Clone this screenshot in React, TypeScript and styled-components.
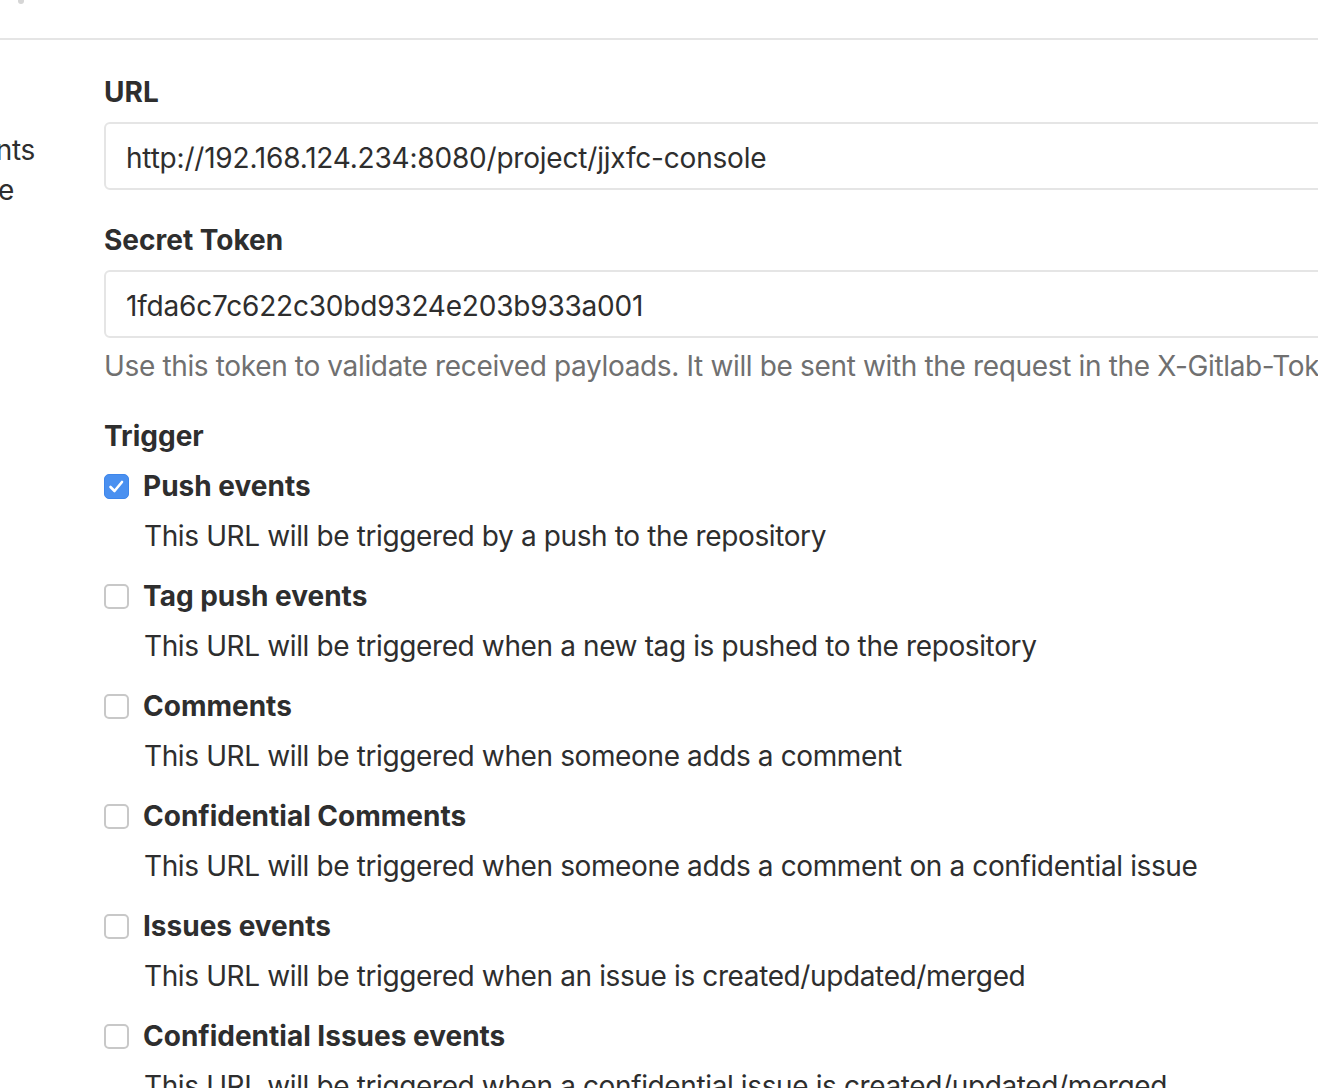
import React from "react";
import styled, { createGlobalStyle } from "styled-components";

const Global = createGlobalStyle`
  html, body { margin: 0; padding: 0; background: #fff; overflow: hidden; }
  body { font-family: Inter, "Noto Sans", "Liberation Sans", sans-serif; color: #2e2e2e; }
  * { box-sizing: border-box; }
`;

const Page = styled.div`
  width: 1318px;
  height: 1088px;
  overflow: hidden;
  display: flex;
  flex-direction: column;
`;

const TopBar = styled.div`
  height: 40px;
  flex: none;
  border-bottom: 2px solid #e5e5e5;
  position: relative;
`;

const TopFragment = styled.span`
  position: absolute;
  left: 18px;
  top: -2px;
  width: 6px;
  height: 6px;
  background: #d6d6d6;
  border-radius: 0 0 3px 3px;
`;

const Row = styled.div`
  display: flex;
  align-items: flex-start;
`;

const Sidebar = styled.div`
  flex: none;
  width: 104px;
  padding-top: 90px;
  display: flex;
  flex-direction: column;
  overflow: hidden;
`;

const SideLine = styled.div<{ $end: number }>`
  font-size: 28px;
  line-height: 40px;
  letter-spacing: -0.3px;
  white-space: nowrap;
  text-align: right;
  width: ${(p) => p.$end}px;
  direction: rtl;
  overflow: hidden;
`;

const Main = styled.div`
  flex: none;
  width: 1400px;
  padding-top: 32px;
  display: flex;
  flex-direction: column;
`;

const Label = styled.div<{ $top?: number }>`
  font-size: 28px;
  line-height: 40px;
  font-weight: 700;
  letter-spacing: 0;
  color: #2e2e2e;
  margin-top: ${(p) => p.$top ?? 0}px;
`;

const Input = styled.div`
  margin-top: 10px;
  height: 68px;
  border: 2px solid #e5e5e5;
  border-radius: 6px;
  padding: 4px 20px 0;
  display: flex;
  align-items: center;
  font-size: 28px;
  letter-spacing: -0.2px;
  color: #2e2e2e;
  white-space: nowrap;
`;

const Help = styled.div`
  margin-top: 8px;
  font-size: 28px;
  line-height: 40px;
  letter-spacing: -0.35px;
  color: #707070;
  white-space: nowrap;
`;

const TriggerList = styled.div`
  display: flex;
  flex-direction: column;
  gap: 20px;
  margin-top: 10px;
`;

const Item = styled.div`
  display: flex;
  flex-direction: column;
  gap: 10px;
`;

const CheckRow = styled.label`
  display: flex;
  align-items: center;
  gap: 14px;
  height: 40px;
`;

const Box = styled.span<{ $checked?: boolean }>`
  width: 25px;
  height: 25px;
  flex: none;
  border-radius: 5px;
  display: flex;
  align-items: center;
  justify-content: center;
  background: ${(p) => (p.$checked ? "#4a90f0" : "#fff")};
  border: ${(p) => (p.$checked ? "1px solid #3f86ea" : "2px solid #c8c8c8")};
`;

const CheckLabel = styled.span`
  font-size: 28px;
  line-height: 40px;
  font-weight: 700;
  letter-spacing: 0;
  color: #2e2e2e;
`;

const Desc = styled.div`
  padding-left: 40px;
  font-size: 28px;
  line-height: 40px;
  letter-spacing: -0.38px;
  color: #2e2e2e;
  white-space: nowrap;
`;

const triggers = [
  { label: "Push events", desc: "This URL will be triggered by a push to the repository", checked: true },
  { label: "Tag push events", desc: "This URL will be triggered when a new tag is pushed to the repository" },
  { label: "Comments", desc: "This URL will be triggered when someone adds a comment" },
  { label: "Confidential Comments", desc: "This URL will be triggered when someone adds a comment on a confidential issue" },
  { label: "Issues events", desc: "This URL will be triggered when an issue is created/updated/merged" },
  { label: "Confidential Issues events", desc: "This URL will be triggered when a confidential issue is created/updated/merged" },
];

export default function App() {
  return (
    <Page>
      <Global />
      <TopBar>
        <TopFragment />
      </TopBar>
      <Row>
        <Sidebar>
          <SideLine $end={35}>in response to events</SideLine>
          <SideLine $end={14}>in preference</SideLine>
        </Sidebar>
        <Main>
          <Label>URL</Label>
          <Input>http://192.168.124.234:8080/project/jjxfc-console</Input>
          <Label $top={30}>Secret Token</Label>
          <Input>1fda6c7c622c30bd9324e203b933a001</Input>
          <Help>
            Use this token to validate received payloads. It will be sent with the request in the X-Gitlab-Token HTTP header.
          </Help>
          <Label $top={30}>Trigger</Label>
          <TriggerList>
            {triggers.map((t) => (
              <Item key={t.label}>
                <CheckRow>
                  <Box $checked={t.checked}>
                    {t.checked && (
                      <svg width="17" height="15" viewBox="0 0 17 15">
                        <path d="M2.5 8 L6.5 12 L14 3" fill="none" stroke="#fff" strokeWidth="2.6" strokeLinecap="round" strokeLinejoin="round" />
                      </svg>
                    )}
                  </Box>
                  <CheckLabel>{t.label}</CheckLabel>
                </CheckRow>
                <Desc>{t.desc}</Desc>
              </Item>
            ))}
          </TriggerList>
        </Main>
      </Row>
    </Page>
  );
}
